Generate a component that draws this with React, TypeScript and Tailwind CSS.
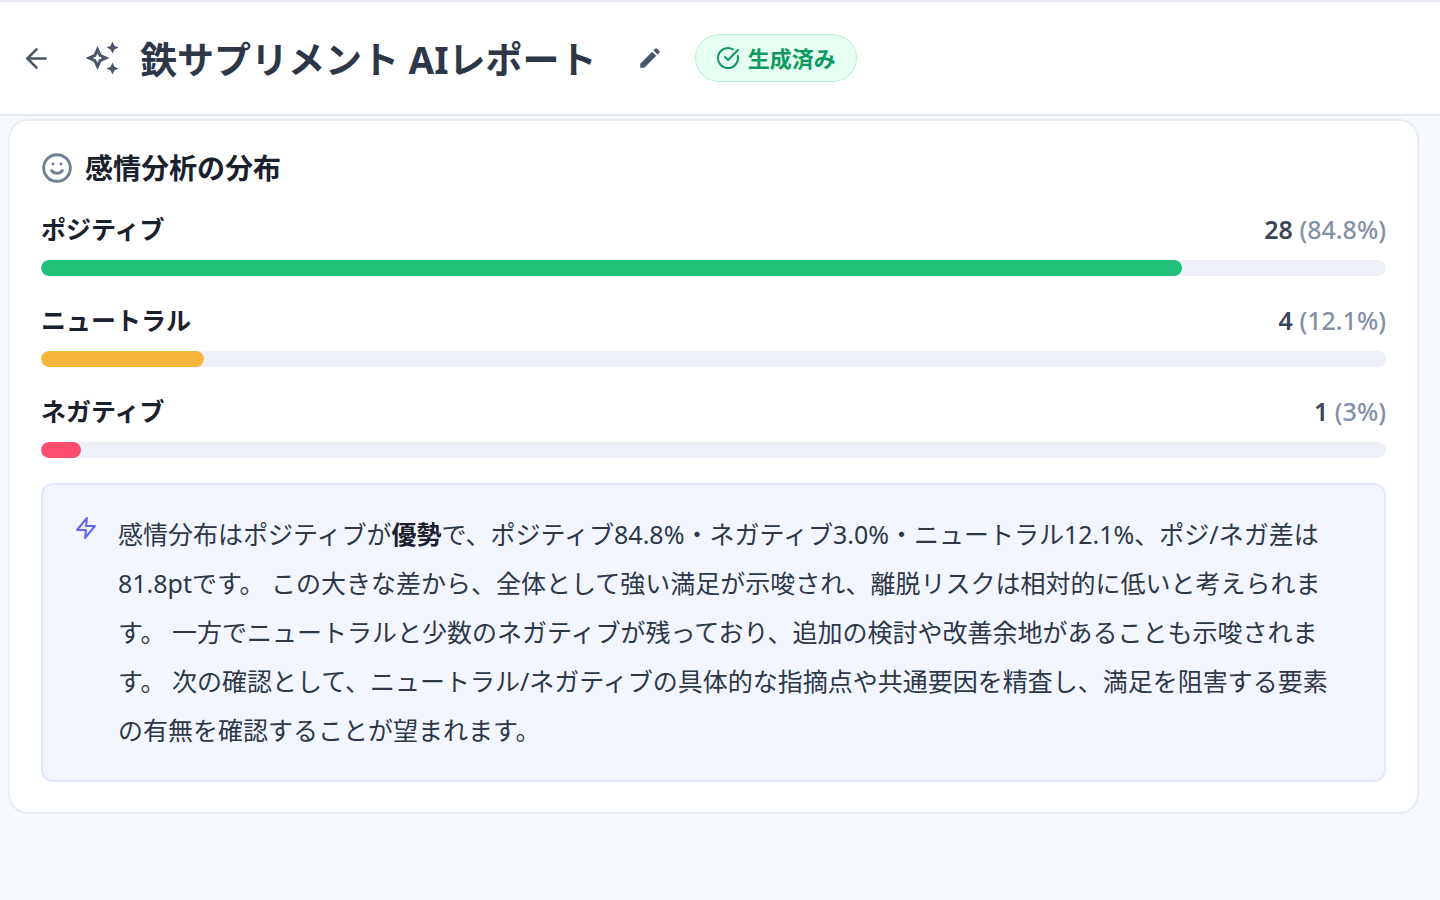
import { ArrowLeft, CircleCheckBig, Smile } from 'lucide-react';
import { FiZap } from 'react-icons/fi';
import { MdEdit, MdOutlineAutoAwesome } from 'react-icons/md';

const sentiments = [
  { label: 'ポジティブ', count: 28, percent: 84.8, color: 'bg-[#22c17b]' },
  { label: 'ニュートラル', count: 4, percent: 12.1, color: 'bg-[#f6b63c]' },
  { label: 'ネガティブ', count: 1, percent: 3, color: 'bg-[#ff4d6d]' },
];

const Header = () => {
  return (
    <header className="flex h-[116px] items-center border-t-2 border-b-2 border-[#e5eaf3] bg-white pl-[21px]">
      <button type="button" aria-label="戻る" className="text-[#4a5568]">
        <ArrowLeft size={31} strokeWidth={2} />
      </button>
      <MdOutlineAutoAwesome size={36} className="ml-8 shrink-0 text-[#4a5568]" />
      <h1 className="ml-5 pt-1 text-[37px] leading-[48px] font-bold text-[#2d3748]">
        鉄サプリメント AIレポート
      </h1>
      <button type="button" aria-label="編集" className="ml-10 text-[#4a5568]">
        <MdEdit size={26} />
      </button>
      <span className="ml-8 flex h-12 items-center gap-2 rounded-full border border-[#b9f0d3] bg-[#e6fff3] px-5 text-[22px] font-bold text-[#0f9960]">
        <CircleCheckBig size={24} strokeWidth={2} />
        生成済み
      </span>
    </header>
  );
};

const SentimentRow = ({ label, count, percent, color }: (typeof sentiments)[number]) => {
  return (
    <li>
      <div className="flex items-center justify-between text-[25px] leading-[34px] font-semibold">
        <span className="text-[#1a202c]">{label}</span>
        <span className="text-[#3b4557]">
          {count} <span className="font-medium text-[#8490a8]">({percent}%)</span>
        </span>
      </div>
      <div className="mt-3.5 h-4 overflow-hidden rounded-full bg-[#edf0f6]">
        <div className={`h-full rounded-full ${color}`} style={{ width: `${percent}%` }}></div>
      </div>
    </li>
  );
};

export default function App() {
  return (
    <div
      lang="ja"
      className="min-h-screen bg-[#f6fafd] font-['Noto_Sans','Noto_Sans_CJK_JP',sans-serif]"
    >
      <Header />
      <main className="pt-[3px] pr-[21px] pl-2">
        <section className="rounded-[20px] border-2 border-[#e8edf4] bg-white px-[31px] pt-[27px] pb-[30px]">
          <h2 className="flex items-center gap-3 text-[28px] leading-10 font-bold text-[#1a202c]">
            <Smile size={32} strokeWidth={2.2} className="text-[#718096]" />
            感情分析の分布
          </h2>

          <ul className="mt-6 flex flex-col gap-[27px]">
            {sentiments.map((item) => (
              <SentimentRow key={item.label} {...item} />
            ))}
          </ul>

          <div className="mt-[25px] flex gap-5 rounded-xl border-2 border-[#e0e7ff] bg-[#f3f6ff] py-[25px] pr-12 pl-[31px]">
            <FiZap size={24} className="mt-1.5 shrink-0 text-[#6366f1]" />
            <p className="text-[25px] leading-[49px] text-[#2d3748]">
              感情分布はポジティブが<strong className="text-[#1a202c]">優勢</strong>
              で、ポジティブ84.8%・ネガティブ3.0%・ニュートラル12.1%、ポジ/ネガ差は81.8ptです。
              この大きな差から、全体として強い満足が示唆され、離脱リスクは相対的に低いと考えられます。
              一方でニュートラルと少数のネガティブが残っており、追加の検討や改善余地があることも示唆されます。
              次の確認として、ニュートラル/ネガティブの具体的な指摘点や共通要因を精査し、満足を阻害する要素の有無を確認することが望まれます。
            </p>
          </div>
        </section>
      </main>
    </div>
  );
}
